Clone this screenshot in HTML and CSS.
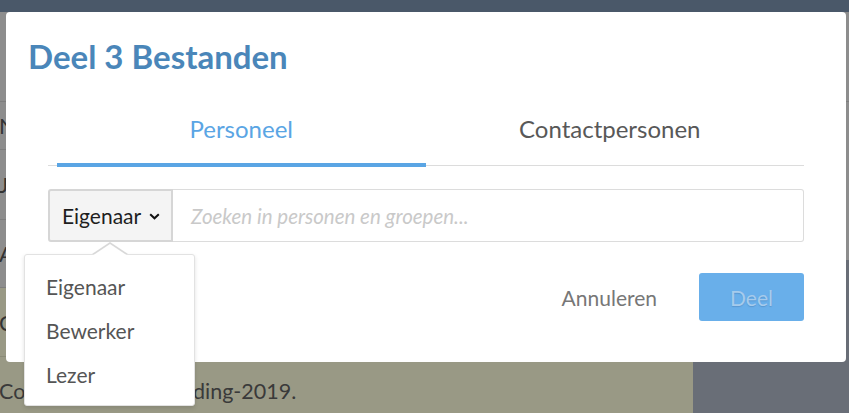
FILE: index.html
```html
<!DOCTYPE html>
<html lang="nl">
<head>
<meta charset="utf-8">
<title>Deel 3 Bestanden</title>
<link rel="stylesheet" href="styles.css">
</head>
<body>
<div class="page">
  <div class="topbar"></div>
  <div class="main">
    <div class="content">
      <div class="row row-head"></div>
      <div class="row row-1"><span>Notulen vergadering</span></div>
      <div class="row row-2"><span>Jaarverslag</span></div>
      <div class="row row-3"><span>Agenda</span></div>
      <div class="row row-4 olive"><span>Contract</span></div>
      <div class="row row-5 olive"><span>Conferentie uitbesteding-2019.</span></div>
    </div>
    <div class="sidebar">
      <div class="side-head"></div>
      <div class="side-top"></div>
      <div class="side-bottom"></div>
    </div>
  </div>
</div>

<div class="modal">
  <h1 class="modal-title">Deel 3 Bestanden</h1>
  <div class="modal-body">
    <div class="tabs">
      <div class="tab active">Personeel</div>
      <div class="tab">Contactpersonen</div>
    </div>
    <div class="input-group">
      <button class="role-select">Eigenaar
        <svg class="chev" width="11" height="7" viewBox="0 0 11 7"><polyline points="1.2,1.2 5.5,5.3 9.8,1.2" fill="none" stroke="#111" stroke-width="2"/></svg>
      </button>
      <div class="search">Zoeken in personen en groepen...</div>
    </div>
    <div class="footer">
      <button class="btn-cancel">Annuleren</button>
      <button class="btn-share">Deel</button>
    </div>
  </div>
</div>

<div class="menu">
  <div class="menu-item">Eigenaar</div>
  <div class="menu-item">Bewerker</div>
  <div class="menu-item">Lezer</div>
</div>
</body>
</html>
```
FILE: styles.css
```css
* { box-sizing: border-box; }
html, body { margin: 0; padding: 0; }
body {
  width: 849px;
  height: 413px;
  overflow: hidden;
  font-family: Lato, "Open Sans", sans-serif;
  position: relative;
  background: #8d8d8d;
}
.page { display: flex; flex-direction: column; height: 413px; }
.topbar { height: 12px; background: #4a5869; flex: none; }
.main { flex: 1; display: flex; }
.content { width: 693px; display: flex; flex-direction: column; background: #8d8d8d; }
.row {
  border-bottom: 1px solid #7e7e7e;
  display: flex;
  align-items: center;
  font-size: 22px;
  color: #333;
  white-space: nowrap;
  overflow: hidden;
}
.row span { margin-left: -1px; }
.row-head { height: 90px; }
.row-1 { height: 48px; }
.row-2 { height: 70px; }
.row-3 { height: 68px; }
.row-4 { height: 69px; }
.row-5 { flex: 1; border-bottom: 0; padding-top: 12px; font-size: 21.5px; color: #3a3a3a; }
.olive { background: #999985; border-bottom-color: #8a8a77; }
.sidebar { flex: 1; display: flex; flex-direction: column; }
.side-head { height: 90px; background: #8d8d8d; border-bottom: 1px solid #7e7e7e; }
.side-top { height: 158px; background: #8d8d8d; }
.side-bottom { flex: 1; background: #696e77; }

.modal {
  position: absolute;
  left: 6px;
  top: 12px;
  width: 840px;
  height: 350px;
  background: #fff;
  border-radius: 4px;
}
.modal-title {
  margin: 0;
  padding: 25px 0 0 22px;
  font-size: 33px;
  line-height: 38px;
  font-weight: 700;
  color: #4a86b9;
}
.modal-body { padding: 0 42px; }
.tabs {
  margin-top: 40px;
  display: grid;
  grid-template-columns: 1fr 1fr;
  padding: 0 10px 0 9px;
  border-bottom: 1px solid #dcdcdc;
}
.tab {
  text-align: center;
  font-size: 24px;
  line-height: 28px;
  color: #585858;
  padding-bottom: 22px;
}
.tab.active {
  color: #5aa5e4;
  border-bottom: 4px solid #5aa5e4;
  margin-bottom: -2px;
  padding-bottom: 20px;
}
.input-group {
  margin-top: 23px;
  display: flex;
  height: 53px;
}
.role-select {
  width: 125px;
  flex: none;
  background: #f4f4f4;
  border: 2px solid #d6d6d6;
  border-radius: 3px 0 0 3px;
  font-family: inherit;
  font-size: 21px;
  color: #1e1e1e;
  display: flex;
  align-items: center;
  gap: 8px;
  padding: 0 0 0 12px;
}
.chev { margin-top: 2px; }
.search {
  flex: 1;
  border: 1px solid #dcdcdc;
  border-left: 0;
  border-radius: 0 3px 3px 0;
  display: flex;
  align-items: center;
  padding-left: 18px;
  font-style: italic;
  font-size: 20.5px;
  color: #c9c9c9;
}
.footer {
  margin-top: 31px;
  display: flex;
  justify-content: flex-end;
  align-items: center;
  gap: 22px;
}
.btn-cancel {
  background: none;
  border: 0;
  font-family: inherit;
  font-size: 21px;
  color: #777;
  padding: 0 20px;
  height: 48px;
}
.btn-share {
  width: 105px;
  height: 48px;
  border: 0;
  border-radius: 3px;
  background: #69afea;
  color: #a6cbec;
  font-family: inherit;
  font-size: 21px;
  text-shadow: 0 1px 1px rgba(60, 110, 160, 0.35);
}

.menu {
  position: absolute;
  left: 24px;
  top: 254px;
  width: 171px;
  height: 152px;
  background: #fff;
  border: 1px solid #e2e2e2;
  border-radius: 3px;
  box-shadow: 0 2px 4px rgba(0, 0, 0, 0.12);
  padding-top: 10px;
}
.menu::before, .menu::after {
  content: "";
  position: absolute;
  left: 67px;
  border-style: solid;
  border-color: transparent;
  border-width: 0 18px 12px;
}
.menu::before { top: -13px; border-bottom-color: #d8d8d8; }
.menu::after { top: -11px; border-bottom-color: #fff; }
.menu-item {
  height: 44px;
  line-height: 44px;
  padding-left: 21px;
  font-size: 21px;
  color: #555;
}
```
